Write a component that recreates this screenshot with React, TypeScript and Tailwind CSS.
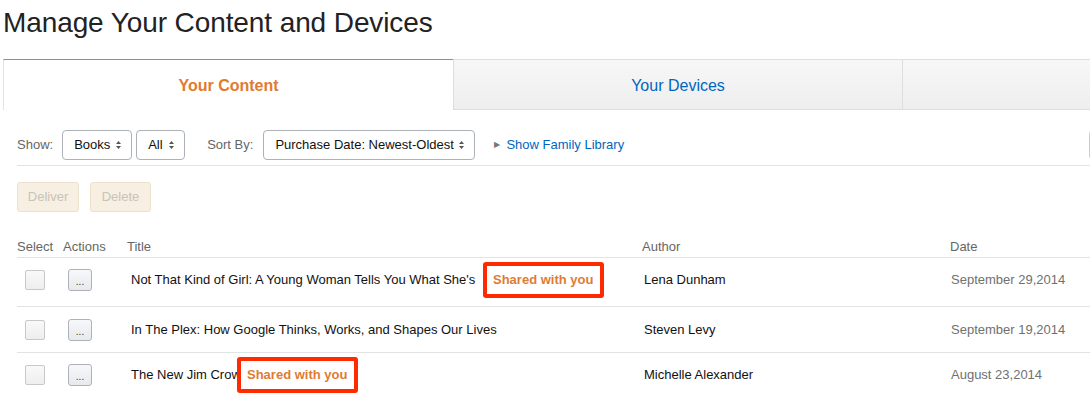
import React from "react";

const font = { fontFamily: '"Liberation Sans", Arial, Helvetica, sans-serif' };

const UpDown = () => (
  <svg width="7" height="10" viewBox="0 0 7 10" className="text-[#555]">
    <path d="M3.5 1 L6 4 H1 Z" fill="currentColor" />
    <path d="M3.5 9 L6 6 H1 Z" fill="currentColor" />
  </svg>
);

const Select = ({ label, className }: { label: string; className?: string }) => (
  <div
    className={`h-[30px] flex items-center justify-between border border-[#adb1b8] rounded-[4px] bg-white pl-[11px] pr-[9px] text-[13px] text-[#111] ${className || ""}`}
  >
    <span>{label}</span>
    <UpDown />
  </div>
);

const rows = [
  {
    title: "Not That Kind of Girl: A Young Woman Tells You What She's",
    author: "Lena Dunham",
    date: "September 29,2014",
    shared: 356,
    h: "h-[49px] pb-[4px]",
  },
  {
    title: "In The Plex: How Google Thinks, Works, and Shapes Our Lives",
    author: "Steven Levy",
    date: "September 19,2014",
    h: "h-[46px]",
  },
  {
    title: "The New Jim Crow",
    author: "Michelle Alexander",
    date: "August 23,2014",
    shared: 110,
    h: "h-[48px] pb-[4px]",
  },
];

export default function App() {
  return (
    <div className="w-full h-[400px] overflow-hidden bg-white" style={font}>
      <div className="w-[1360px] pl-[3px]">
        <h1 className="pt-[7px] text-[28px] leading-[32px] text-[#222] font-normal tracking-[-0.1px]">
          Manage Your Content and Devices
        </h1>

        {/* Tabs */}
        <div className="mt-[20px] flex h-[51px]">
          <div className="w-[450px] flex items-center justify-center pt-[2px] border-t border-t-[#d9793a] border-l border-l-[#e3e3e3] bg-white text-[16px] font-bold text-[#e07b30]">
            Your Content
          </div>
          <div className="w-[450px] flex items-center justify-center pt-[2px] border border-[#dedede] bg-gradient-to-b from-[#f7f7f7] to-[#eeeeee] text-[16px] text-[#0066c0]">
            Your Devices
          </div>
          <div className="w-[450px] border-y border-r border-[#dedede] bg-gradient-to-b from-[#f7f7f7] to-[#eeeeee]" />
        </div>

        <div className="pl-[14px]">
          {/* Filters */}
          <div className="mt-[20px] pb-[5px] border-b border-[#e3e3e3] flex items-center text-[13px]">
            <span className="text-[#666] mr-[9px]">Show:</span>
            <Select label="Books" className="w-[70px]" />
            <Select label="All" className="w-[49px] ml-[4px]" />
            <span className="text-[#666] ml-[22px] mr-[10px]">Sort By:</span>
            <Select label="Purchase Date: Newest-Oldest" className="w-[212px]" />
            <span className="ml-[19px] mr-[6px] text-[#777] text-[8px]">▶</span>
            <span className="text-[#0066c0]">Show Family Library</span>
            <div className="ml-[465px] w-[60px] h-[30px] border border-[#ccc] rounded-[4px]" />
          </div>

          {/* Action buttons */}
          <div className="mt-[16px] flex gap-[11px]">
            <div className="w-[62px] h-[30px] flex items-center justify-center border border-[#ece1cc] rounded-[3px] bg-[#f6efe2] text-[13px] text-[#c9c3b8]">
              Deliver
            </div>
            <div className="w-[61px] h-[30px] flex items-center justify-center border border-[#ece1cc] rounded-[3px] bg-[#f6efe2] text-[13px] text-[#c9c3b8]">
              Delete
            </div>
          </div>

          {/* Table header */}
          <div className="mt-[27px] flex text-[13px] leading-[16px] text-[#666] pb-[2px] border-b border-[#e3e3e3]">
            <div className="w-[46px]">Select</div>
            <div className="w-[64px]">Actions</div>
            <div className="w-[515px]">Title</div>
            <div className="w-[308px]">Author</div>
            <div>Date</div>
          </div>

          {rows.map((r) => (
            <div key={r.title} className={`flex items-center ${r.h} border-b border-[#e3e3e3] text-[13px] text-[#111]`}>
              <div className="w-[46px] pl-[8px]">
                <div className="w-[20px] h-[20px] border border-[#c8c8c8] rounded-[2px] bg-gradient-to-b from-[#f9f9f9] to-[#eeeeee]" />
              </div>
              <div className="w-[64px] pl-[5px]">
                <div className="w-[24px] h-[22px] flex items-end justify-center pb-[3px] border border-[#adb1b8] rounded-[3px] bg-gradient-to-b from-[#f7f8fa] to-[#e7e9ec] text-[10px] leading-[10px] text-[#333]">
                  ...
                </div>
              </div>
              <div className="relative w-[515px] pl-[4px] whitespace-nowrap">
                <span>{r.title}</span>
                {r.shared !== undefined && (
                  <span
                    className="absolute top-1/2 -translate-y-1/2 h-[36px] w-[121px] flex items-center pl-[6px] border-[4px] border-[#ff2a00] rounded-[3px] bg-white font-bold text-[#e07b34]"
                    style={{ left: r.shared }}
                  >
                    Shared with you
                  </span>
                )}
              </div>
              <div className="w-[308px] pl-[2px]">{r.author}</div>
              <div className="pl-[1px] text-[#707070]">{r.date}</div>
            </div>
          ))}
        </div>
      </div>
    </div>
  );
}
